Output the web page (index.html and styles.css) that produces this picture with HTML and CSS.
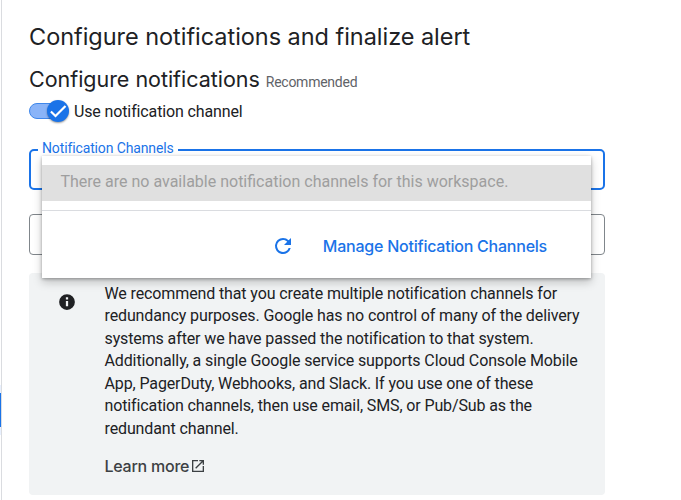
FILE: index.html
```
<!DOCTYPE html>
<html lang="en"><head><meta charset="utf-8"><title>Configure notifications</title><link rel="stylesheet" href="styles.css"></head>
<body>
<div class="rail"><span class="rail-mark"></span></div>
<main>
<h1>Configure notifications and finalize alert</h1>
<h2><span>Configure notifications</span><small>Recommended</small></h2>
<div class="toggle-row"><span class="track"><span class="thumb"><svg viewBox="0 0 24 24"><path d="M3.500 12.500l5.500 5.500L21 6" fill="none" stroke="#fff" stroke-width="2.600"/></svg></span></span><span class="toggle-label">Use notification channel</span></div>
<div class="field active"><span class="field-label">Notification Channels</span>
<div class="menu"><div class="empty">There are no available notification channels for this workspace.</div>
<div class="actions"><svg class="refresh" viewBox="0 0 24 24"><path d="M17.65 6.35A7.96 7.96 0 0 0 12 4a8 8 0 1 0 7.73 10h-2.08A6 6 0 1 1 12 6c1.66 0 3.14.69 4.22 1.78L13 11h7V4z"/></svg><a class="manage">Manage Notification Channels</a></div></div></div>
<div class="field second"></div>
<section class="info"><svg class="info-icon" viewBox="0 0 24 24"><path d="M12 1.500a10.500 10.500 0 1 0 0 21 10.500 10.500 0 0 0 0-21zm1.500 16h-3v-7h3zm0-9h-3v-3h3z"/></svg>
<div class="copy"><p>We recommend that you create multiple notification channels for<br>redundancy purposes. Google has no control of many of the delivery<br>systems after we have passed the notification to that system.<br>Additionally, a single Google service supports Cloud Console Mobile<br>App, PagerDuty, Webhooks, and Slack. If you use one of these<br>notification channels, then use email, SMS, or Pub/Sub as the<br>redundant channel.</p>
<a class="learn"><span>Learn more</span><svg viewBox="0 0 24 24"><path d="M19 19H5V5h7V3H3v18h18v-9h-2zM14 3v2h3.600l-9.800 9.800 1.400 1.400L19 6.400V10h2V3z"/></svg></a></div></section>
</main></body></html>
```
FILE: styles.css
```
*{box-sizing:border-box}
body{margin:0;width:681px;height:500px;overflow:hidden;background:#fff;display:flex;font-family:Roboto,sans-serif;color:#202124}
.rail{width:2px;height:500px;border-right:1px solid #dadce0;padding-top:385px;flex:none}
.rail-mark{display:block;width:1px;height:50px;background:#1a73e8;border:solid #e8f0fe;border-width:8px 0}
main{width:576px;margin-left:27px;padding-top:21px}
h1,h2{margin:0;white-space:nowrap}
h1{font:400 23.500px/32px Inter,sans-serif;letter-spacing:-.04px}
h2{display:flex;align-items:baseline;gap:6px;font:400 21.500px/32px Inter,sans-serif;letter-spacing:-.03px;margin-top:10px}
small{font:400 14px/20px Roboto,sans-serif;letter-spacing:-.25px;color:#5f6368}
.toggle-row{display:flex;align-items:center;height:24px;margin-top:4px}
.track{width:36px;height:16px;border:1px solid #3f87eb;border-radius:8px;background:#8ab4f8;display:flex;align-items:center;justify-content:flex-end}
.thumb{width:22px;height:22px;flex:none;border-radius:50%;background:#1a73e8;margin-right:-5px;display:grid;place-items:center;box-shadow:0 1px 2px rgba(0,0,0,.4)}
.thumb svg{width:20px}
.toggle-label{font-size:16px;margin-left:9px;letter-spacing:-.13px}
.field{position:relative;height:41px;border:1px solid #80868b;border-radius:4px}
.active{margin-top:26px;border:2px solid #1a73e8;border-radius:5px}
.field-label{position:absolute;left:7px;top:-12px;padding:0 4px;background:#fff;color:#1a73e8;font-size:14px;line-height:18px;letter-spacing:-.13px;white-space:nowrap}
.menu{position:absolute;z-index:2;left:11px;top:5px;width:549px;height:122px;background:#fff;padding-top:9px;box-shadow:0 4px 9px rgba(0,0,0,.22),0 1px 3px rgba(0,0,0,.3)}
.empty{height:36px;line-height:33px;background:#e0e0e0;color:#9e9e9e;padding-left:18.500px;font-size:16px;white-space:nowrap}
.actions{margin-top:9px;border-top:1px solid #dadce0;height:68px;display:flex;align-items:center;justify-content:flex-end;padding:3px 44px 0 0;color:#1a73e8}
.refresh{width:24px;fill:currentColor;margin-right:28px}
.manage{font:500 16px/24px Inter,sans-serif;letter-spacing:-.23px;white-space:nowrap}
.second{margin-top:24px}
.info{margin-top:18px;background:#f1f3f4;border-radius:4px;height:222px;display:flex;padding:9.500px 0 0 29px}
.info-icon{width:18px;height:18px;margin-top:10.500px;flex:none;fill:#202124}
.copy{margin-left:28.500px}
p{font-size:16px;line-height:22.500px;letter-spacing:-.12px;margin:0;white-space:nowrap}
.learn{display:flex;align-items:center;gap:1px;margin-top:15px;font:500 16px/22px Inter,sans-serif;letter-spacing:-.24px;color:#3c4043}
.learn svg{width:16px;height:16px;fill:#3c4043}
```
